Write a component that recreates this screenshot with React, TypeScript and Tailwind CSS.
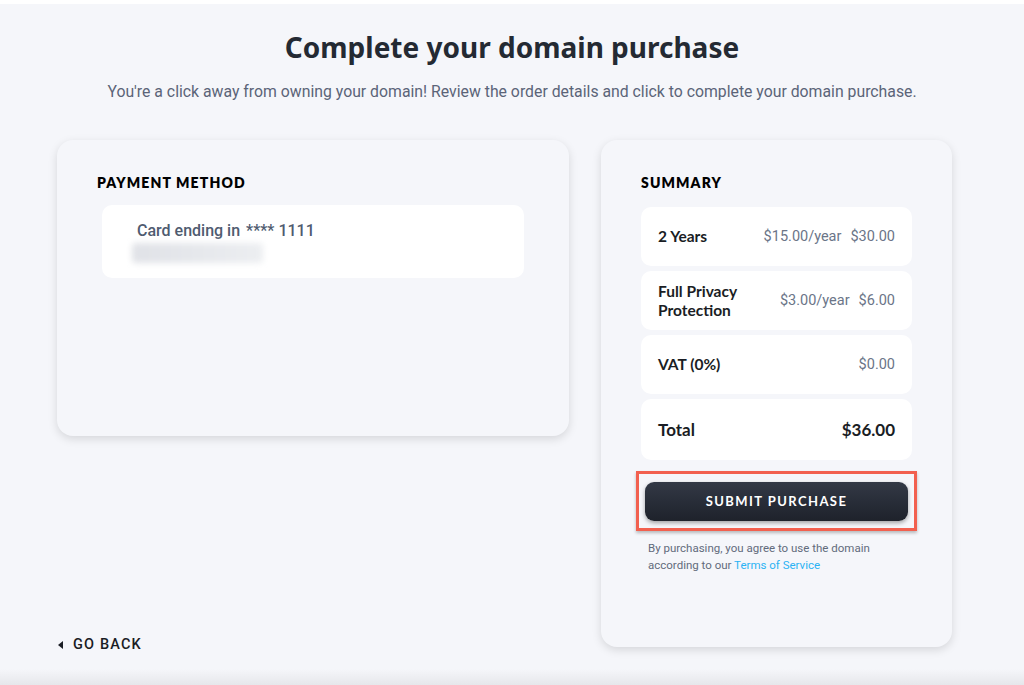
import React from 'react';

const heading = { fontFamily: 'Lato, "Noto Sans", sans-serif' };
const title = { fontFamily: '"Noto Sans", Lato, sans-serif' };
const body = { fontFamily: 'Roboto, "Liberation Sans", sans-serif' };

function SummaryRow({
  label,
  rate,
  amount,
  total,
}: {
  label: React.ReactNode;
  rate?: string;
  amount: string;
  total?: boolean;
}) {
  return (
    <div
      className={`flex items-center justify-between rounded-[10px] bg-white px-[17px] ${
        total ? 'h-[61px]' : 'h-[59px]'
      }`}
    >
      <span
        style={heading}
        className={`font-bold text-[#1a1d24] leading-[19px] ${total ? 'text-[17px]' : 'text-[15.5px]'}`}
      >
        {label}
      </span>
      <span className="flex items-center gap-[9px]">
        {rate && (
          <span style={body} className="text-[14.5px] text-[#6b7588]">
            {rate}
          </span>
        )}
        <span
          style={total ? heading : body}
          className={total ? 'text-[17px] font-bold text-[#1a1d24]' : 'text-[14.5px] text-[#6b7588]'}
        >
          {amount}
        </span>
      </span>
    </div>
  );
}

export default function App() {
  return (
    <div className="relative flex h-[685px] w-[1024px] flex-col overflow-hidden bg-[#f5f6fa]">
      <div className="h-[4px] bg-white" />
      <h1 style={title} className="mt-[25px] text-center text-[28px] font-bold leading-[36px] text-[#242a33]">
        Complete your domain purchase
      </h1>
      <p style={body} className="mt-[17px] text-center text-[15.8px] leading-[20px] text-[#5b6478]">
        You're a click away from owning your domain! Review the order details and click to complete your domain
        purchase.
      </p>

      <div className="mt-[38px] flex items-start gap-[32px] pl-[57px]">
        <div className="flex w-[512px] flex-col">
          <div className="h-[296px] rounded-[16px] bg-[#f5f6fa] px-[40px] pt-[32px] shadow-[0_3px_10px_rgba(0,0,0,0.13)]">
            <h2 style={heading} className="text-[14px] font-extrabold tracking-[0.08em] text-black">
              PAYMENT METHOD
            </h2>
            <div className="mt-[12px] ml-[5px] h-[73px] w-[422px] rounded-[10px] bg-white pl-[35px] pt-[16px]">
              <div style={body} className="text-[16px] leading-[20px] font-medium text-[#4f5b70]">
                Card ending in <span className="ml-[2px]">**** 1111</span>
              </div>
              <div className="-ml-[5px] mt-[2px] h-[20px] w-[131px] rounded-[4px] bg-gradient-to-r from-[#e0e2e7] to-[#eceef1] blur-[3px]" />
            </div>
          </div>
          <button
            style={body}
            className="mt-[198px] flex items-center gap-[10px] self-start pl-[1px] text-[14.5px] font-medium tracking-[0.08em] text-[#1a1d24]"
          >
            <svg width="5" height="8" viewBox="0 0 5 8">
              <path d="M5 0 L0 4 L5 8 Z" fill="#1a1d24" />
            </svg>
            GO BACK
          </button>
        </div>

        <div className="h-[507px] w-[351px] rounded-[16px] bg-[#f5f6fa] px-[40px] pt-[32px] shadow-[0_3px_10px_rgba(0,0,0,0.13)]">
          <h2 style={heading} className="text-[14px] font-extrabold tracking-[0.08em] text-black">
            SUMMARY
          </h2>
          <div className="mt-[14px] flex flex-col gap-[5px]">
            <SummaryRow label="2 Years" rate="$15.00/year" amount="$30.00" />
            <SummaryRow
              label={
                <>
                  Full Privacy
                  <br />
                  Protection
                </>
              }
              rate="$3.00/year"
              amount="$6.00"
            />
            <SummaryRow label="VAT (0%)" amount="$0.00" />
            <SummaryRow label="Total" amount="$36.00" total />
          </div>
          <div className="mt-[11px] -ml-[5px] w-[281px] border-[3px] border-[#f2604f] px-[6px] pt-[8px] pb-[7px] shadow-[0_2px_3px_rgba(0,0,0,0.25)]">
            <button
              style={heading}
              className="flex h-[39px] w-full items-center justify-center rounded-[9px] bg-gradient-to-b from-[#333946] to-[#1e222b] text-[13px] font-bold tracking-[0.11em] text-white shadow-[0_2px_4px_rgba(0,0,0,0.35)]"
            >
              SUBMIT PURCHASE
            </button>
          </div>
          <p style={body} className="mt-[9px] ml-[7px] text-[11.5px] leading-[17px] text-[#626b7c]">
            By purchasing, you agree to use the domain
            <br />
            according to our <span className="text-[#2cb3f4]">Terms of Service</span>
          </p>
        </div>
      </div>
      <div className="absolute bottom-0 left-0 h-[16px] w-full bg-gradient-to-b from-[#f5f6fa] to-[#e6e7eb]" />
    </div>
  );
}
